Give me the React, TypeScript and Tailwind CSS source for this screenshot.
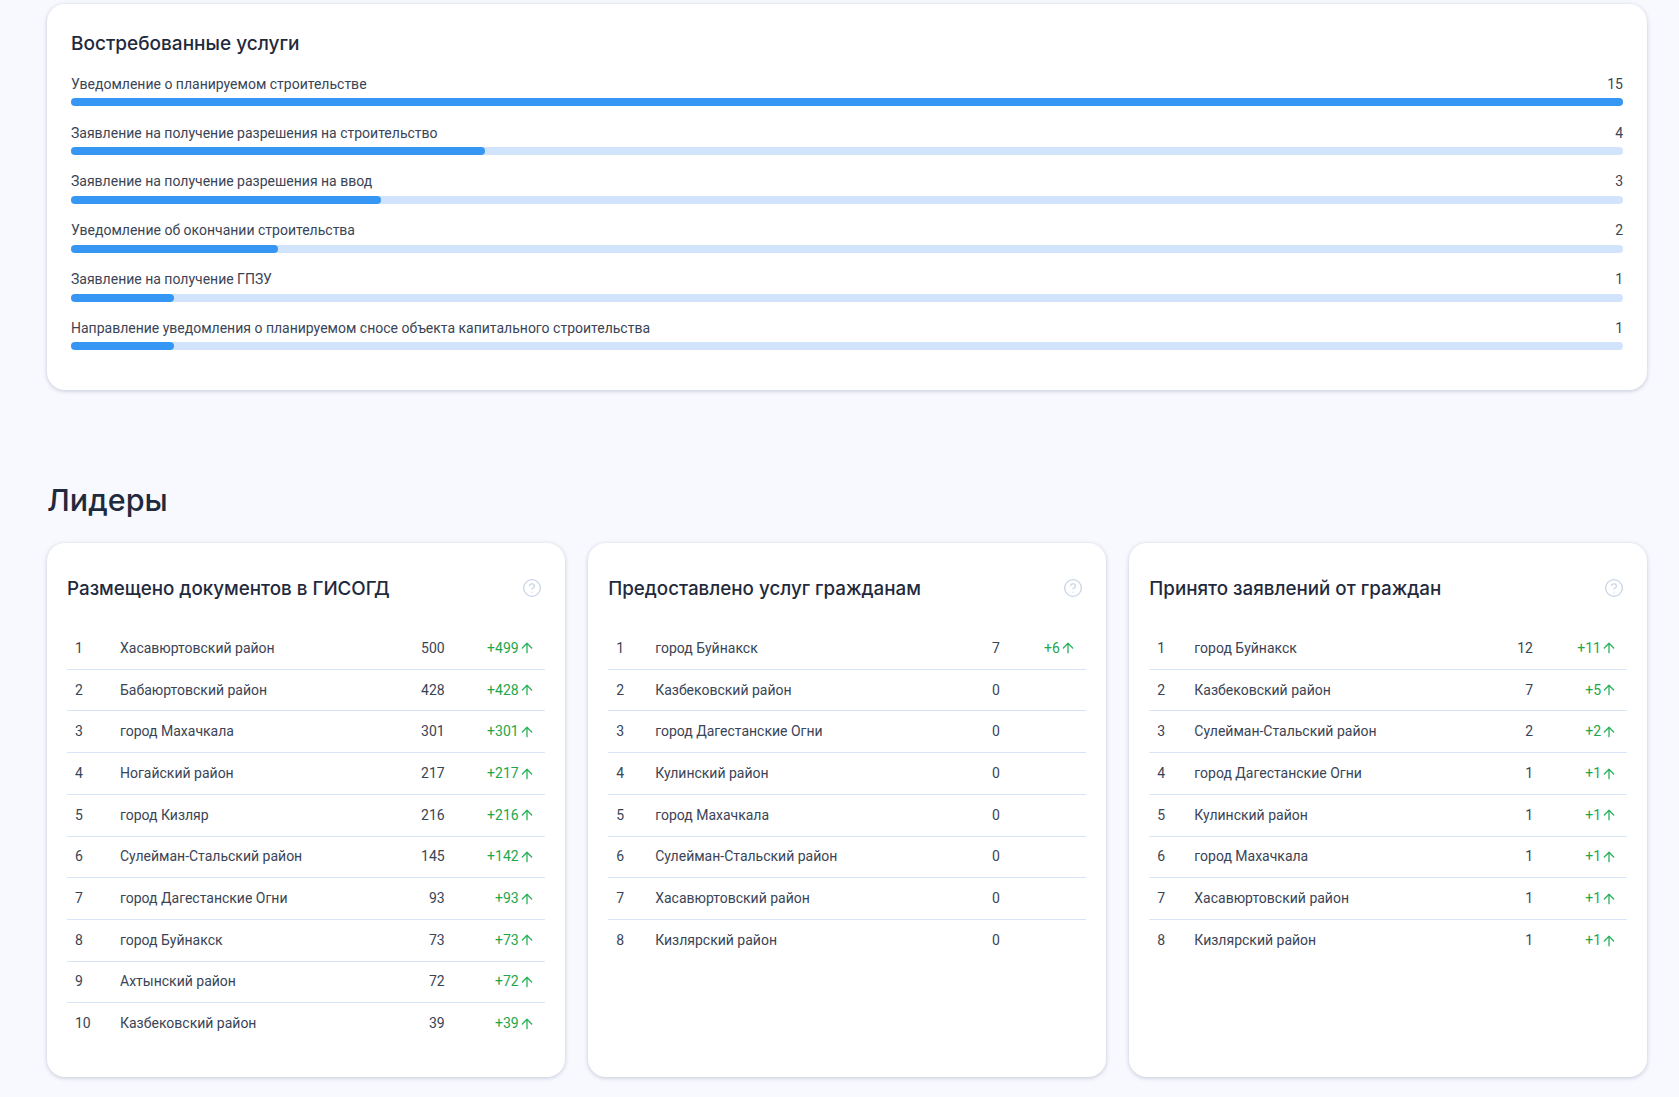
import { ArrowUp, CircleHelp } from "lucide-react";

type Service = { name: string; count: number };
type Leader = { name: string; value: number; delta?: number };

const services: Service[] = [
  { name: "Уведомление о планируемом строительстве", count: 15 },
  { name: "Заявление на получение разрешения на строительство", count: 4 },
  { name: "Заявление на получение разрешения на ввод", count: 3 },
  { name: "Уведомление об окончании строительства", count: 2 },
  { name: "Заявление на получение ГПЗУ", count: 1 },
  {
    name: "Направление уведомления о планируемом сносе объекта капитального строительства",
    count: 1,
  },
];

const documents: Leader[] = [
  { name: "Хасавюртовский район", value: 500, delta: 499 },
  { name: "Бабаюртовский район", value: 428, delta: 428 },
  { name: "город Махачкала", value: 301, delta: 301 },
  { name: "Ногайский район", value: 217, delta: 217 },
  { name: "город Кизляр", value: 216, delta: 216 },
  { name: "Сулейман-Стальский район", value: 145, delta: 142 },
  { name: "город Дагестанские Огни", value: 93, delta: 93 },
  { name: "город Буйнакск", value: 73, delta: 73 },
  { name: "Ахтынский район", value: 72, delta: 72 },
  { name: "Казбековский район", value: 39, delta: 39 },
];

const provided: Leader[] = [
  { name: "город Буйнакск", value: 7, delta: 6 },
  { name: "Казбековский район", value: 0 },
  { name: "город Дагестанские Огни", value: 0 },
  { name: "Кулинский район", value: 0 },
  { name: "город Махачкала", value: 0 },
  { name: "Сулейман-Стальский район", value: 0 },
  { name: "Хасавюртовский район", value: 0 },
  { name: "Кизлярский район", value: 0 },
];

const accepted: Leader[] = [
  { name: "город Буйнакск", value: 12, delta: 11 },
  { name: "Казбековский район", value: 7, delta: 5 },
  { name: "Сулейман-Стальский район", value: 2, delta: 2 },
  { name: "город Дагестанские Огни", value: 1, delta: 1 },
  { name: "Кулинский район", value: 1, delta: 1 },
  { name: "город Махачкала", value: 1, delta: 1 },
  { name: "Хасавюртовский район", value: 1, delta: 1 },
  { name: "Кизлярский район", value: 1, delta: 1 },
];

const titleFont = "font-['Inter','Noto_Sans',sans-serif]";

function LeaderCard({
  title,
  rows,
  nameCol,
  deltaCol,
}: {
  title: string;
  rows: Leader[];
  nameCol: string;
  deltaCol: string;
}) {
  return (
    <div className="rounded-[18px] bg-white px-5 pt-[34px] shadow-[0_1px_4px_rgba(70,85,130,0.3)]">
      <div className="flex items-center justify-between pr-[3px]">
        <h3 className={`${titleFont} text-[18.8px] font-medium leading-6 text-[#1f2a3d]`}>
          {title}
        </h3>
        <CircleHelp size={20} strokeWidth={1.6} className="-mt-[3px] text-[#c9d5e8]" />
      </div>
      <table className="mt-[26.6px] w-full table-fixed text-[14px] text-[#3a4456]">
        <colgroup>
          <col className={nameCol} />
          <col />
          <col className="w-[64px]" />
          <col className={deltaCol} />
        </colgroup>
        <tbody>
          {rows.map((row, i) => (
            <tr
              key={row.name}
              className="h-[41.7px] border-b border-[#d8e4f8] last:border-b-0"
            >
              <td className="pl-2">{i + 1}</td>
              <td>{row.name}</td>
              <td className="text-right">{row.value}</td>
              <td className="pr-[10px] text-right text-[#1ea64a]">
                {row.delta !== undefined && (
                  <span className="inline-flex items-center">
                    +{row.delta}
                    <ArrowUp size={16} strokeWidth={2} className="text-[#2cb35f]" />
                  </span>
                )}
              </td>
            </tr>
          ))}
        </tbody>
      </table>
    </div>
  );
}

export default function App() {
  const max = services[0].count;

  return (
    <div className="min-h-[1097px] overflow-hidden bg-[#f8f9fe] pb-5 pl-[47px] pr-[32px] pt-1 font-['Roboto',sans-serif]">
      <section className="h-[386px] rounded-[18px] bg-white px-6 pt-[28px] shadow-[0_1px_4px_rgba(70,85,130,0.3)]">
        <h3 className={`${titleFont} text-[19px] font-medium leading-6 text-[#1f2a3d]`}>
          Востребованные услуги
        </h3>
        <div className="mt-[18.4px] flex flex-col gap-[16.8px]">
          {services.map((s) => (
            <div key={s.name}>
              <div className="flex h-5 items-center justify-between text-[14px] text-[#3a4456]">
                <span>{s.name}</span>
                <span>{s.count}</span>
              </div>
              <div className="mt-1 h-2 rounded-full bg-[#d2e3fc]">
                <div
                  className="h-2 rounded-full bg-[#3696f3]"
                  style={{ width: `${(s.count / max) * 100}%` }}
                />
              </div>
            </div>
          ))}
        </div>
      </section>

      <h2 className={`${titleFont} mt-[90px] text-[30.5px] font-medium leading-10 text-[#1f2a3d]`}>
        Лидеры
      </h2>

      <div className="mt-[23px] grid h-[534px] grid-cols-3 gap-[23.5px]">
        <LeaderCard
          title="Размещено документов в ГИСОГД"
          rows={documents}
          nameCol="w-[53px]"
          deltaCol="w-[100px]"
        />
        <LeaderCard
          title="Предоставлено услуг гражданам"
          rows={provided}
          nameCol="w-[47px]"
          deltaCol="w-[86px]"
        />
        <LeaderCard
          title="Принято заявлений от граждан"
          rows={accepted}
          nameCol="w-[45px]"
          deltaCol="w-[94px]"
        />
      </div>
    </div>
  );
}
